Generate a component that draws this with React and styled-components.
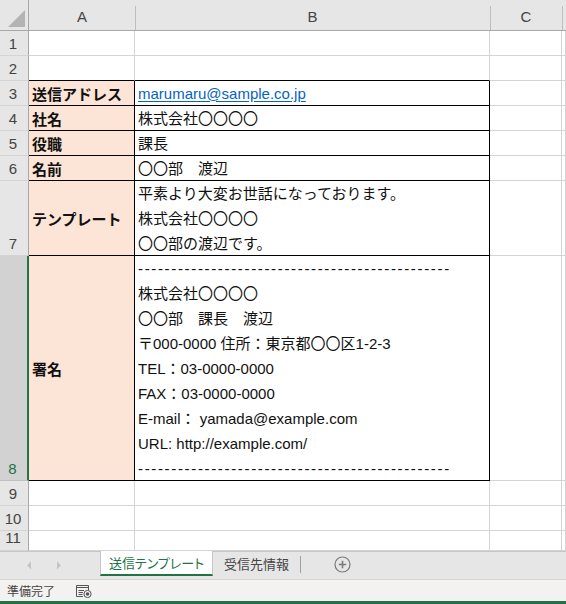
import React from 'react'
import styled, { createGlobalStyle } from 'styled-components'

const GlobalStyle = createGlobalStyle`
  html, body { margin: 0; padding: 0; background: #ffffff; }
  * { box-sizing: border-box; }
  body { font-family: "Liberation Sans", "Noto Sans CJK JP", sans-serif; }
`

const GRID = '#d4d4d4'
const HEAD_LINE = '#a8a8a8'
const GREEN = '#217346'

const Window = styled.div`
  width: 566px;
  height: 604px;
  display: flex;
  flex-direction: column;
  overflow: hidden;
`

const Sheet = styled.div`
  height: 551px;
  overflow: hidden;
  display: flex;
  flex-direction: column;
`

const HeaderRow = styled.div`
  display: flex;
  height: 31px;
  flex-shrink: 0;
  background: #e6e6e6;
  border-bottom: 1px solid ${HEAD_LINE};
`

const Corner = styled.div`
  width: 29px;
  flex-shrink: 0;
  border-right: 1px solid ${HEAD_LINE};
  position: relative;
  &::after {
    content: '';
    position: absolute;
    right: 3px;
    bottom: 3px;
    width: 0;
    height: 0;
    border-left: 17px solid transparent;
    border-bottom: 17px solid #b4b4b4;
  }
`

const ColHead = styled.div`
  width: ${p => p.$w}px;
  flex: ${p => (p.$w ? '0 0 auto' : '1')};
  display: flex;
  align-items: center;
  justify-content: center;
  color: #444;
  font-size: 15px;
  padding-top: 3px;
  position: relative;
  &::after {
    content: '';
    position: absolute;
    right: -1px;
    top: 6px;
    bottom: 0;
    border-right: 1px solid #bdbdbd;
  }
`

const Row = styled.div`
  display: flex;
  height: ${p => p.$h}px;
  flex-shrink: 0;
`

const RowHead = styled.div`
  width: 29px;
  flex-shrink: 0;
  background: ${p => (p.$sel ? '#d2d2d2' : '#e6e6e6')};
  border-right: ${p => (p.$sel ? `2px solid ${GREEN}` : `1px solid ${HEAD_LINE}`)};
  border-bottom: 1px solid ${p => (p.$sel ? '#c0c0c0' : GRID)};
  color: ${p => (p.$sel ? GREEN : '#444')};
  font-size: 15px;
  line-height: 22px;
  display: flex;
  align-items: flex-end;
  justify-content: center;
  padding-right: 2px;
  padding-bottom: ${p => p.$pb || 0}px;
`

const Cell = styled.div`
  width: ${p => p.$w}px;
  flex: ${p => (p.$w ? '0 0 auto' : '1')};
  background: ${p => (p.$label ? '#fce4d6' : '#ffffff')};
  border-right: 1px solid ${p => (p.$darkR ? '#000' : GRID)};
  border-bottom: 1px solid ${p => (p.$darkB ? '#000' : GRID)};
  display: flex;
  flex-direction: column;
  justify-content: center;
  padding-left: 3px;
  color: #111;
  font-size: 15px;
  font-weight: ${p => (p.$label ? 700 : 400)};
  white-space: nowrap;
  overflow: hidden;
`

const Line = styled.div`
  height: 25px;
  line-height: 25px;
`

const Dashes = styled.span`
  letter-spacing: 1.66px;
`

const Link = styled.span`
  color: #0563c1;
  text-decoration: underline;
  text-underline-offset: 2px;
`

const TabBar = styled.div`
  height: 28px;
  flex-shrink: 0;
  background: #e6e6e6;
  border-top: 1px solid #c6c6c6;
  display: flex;
  align-items: stretch;
  font-family: "Noto Sans CJK JP", sans-serif;
  font-feature-settings: "palt";
`

const Arrows = styled.div`
  width: 100px;
  display: flex;
  align-items: center;
  gap: 24px;
  padding-left: 26px;
`

const Tab = styled.div`
  display: flex;
  align-items: center;
  justify-content: center;
  white-space: nowrap;
  font-size: 13px;
  width: ${p => p.$w}px;
  flex-shrink: 0;
  color: ${p => (p.$active ? GREEN : '#444')};
  background: ${p => (p.$active ? '#ffffff' : 'transparent')};
  margin-top: ${p => (p.$active ? '-1px' : '0')};
  border-left: ${p => (p.$active ? '1px solid #c6c6c6' : 'none')};
  border-right: ${p => (p.$active ? '1px solid #c6c6c6' : 'none')};
  border-bottom: 2px solid ${p => (p.$active ? GREEN : 'transparent')};
  margin-bottom: 3px;
`

const Divider = styled.div`
  width: 1px;
  background: #a0a0a0;
  margin: 4px 0 6px;
`

const AddButton = styled.div`
  display: flex;
  align-items: center;
  margin-left: 33px;
  padding-bottom: 2px;
`

const StatusBar = styled.div`
  flex: 1;
  background: #f3f2f1;
  border-top: 1px solid #d6d6d6;
  border-bottom: 3px solid ${GREEN};
  display: flex;
  align-items: center;
  padding-left: 7px;
  gap: 20px;
  font-family: "Noto Sans CJK JP", sans-serif;
  font-size: 12px;
  color: #444;
`

const dash = '-'.repeat(47)

const rows = [
  { n: 1, h: 25 },
  { n: 2, h: 25, darkB: true },
  { n: 3, h: 25, label: '送信アドレス', value: [<Link key="l">marumaru@sample.co.jp</Link>] },
  { n: 4, h: 25, label: '社名', value: ['株式会社〇〇〇〇'] },
  { n: 5, h: 25, label: '役職', value: ['課長'] },
  { n: 6, h: 25, label: '名前', value: ['〇〇部　渡辺'] },
  {
    n: 7,
    h: 75,
    label: 'テンプレート',
    value: ['平素より大変お世話になっております。', '株式会社〇〇〇〇', '〇〇部の渡辺です。'],
  },
  {
    n: 8,
    h: 225,
    sel: true,
    label: '署名',
    value: [
      dash,
      '株式会社〇〇〇〇',
      '〇〇部　課長　渡辺',
      '〒000-0000 住所：東京都〇〇区1-2-3',
      'TEL：03-0000-0000',
      'FAX：03-0000-0000',
      'E-mail： yamada@example.com',
      'URL: http://example.com/',
      dash,
    ],
  },
  { n: 9, h: 25 },
  { n: 10, h: 25 },
  { n: 11, h: 20, pb: 1 },
]

const ArrowIcon = ({ dir }) => (
  <svg width="6" height="9" viewBox="0 0 6 9">
    <path d={dir === 'left' ? 'M5 0.5 L1 4.5 L5 8.5 Z' : 'M1 0.5 L5 4.5 L1 8.5 Z'} fill="#c4c4c4" />
  </svg>
)

const PlusIcon = () => (
  <svg width="17" height="17" viewBox="0 0 17 17">
    <circle cx="8.5" cy="8.5" r="7.5" fill="none" stroke="#7a7a7a" strokeWidth="1.2" />
    <path d="M8.5 4.8 V12.2 M4.8 8.5 H12.2" stroke="#7a7a7a" strokeWidth="1.6" />
  </svg>
)

const MacroIcon = () => (
  <svg width="17" height="14" viewBox="0 0 17 14">
    <path d="M1.5 1.5 H13.5 V6 M1.5 1.5 V12.5 H8" fill="none" stroke="#555" strokeWidth="1" />
    <path d="M1.5 3.5 H13.5" stroke="#555" strokeWidth="1" />
    <path d="M3.5 6.5 H9 M3.5 8.5 H8 M3.5 10.5 H7.5" stroke="#555" strokeWidth="1" />
    <circle cx="12.5" cy="10" r="3.6" fill="#f3f2f1" stroke="#555" strokeWidth="1" />
    <circle cx="12.5" cy="10" r="1.8" fill="#555" />
  </svg>
)

const renderValue = v =>
  typeof v === 'string' && v.startsWith('---') ? <Dashes>{v}</Dashes> : v

export default function App() {
  return (
    <Window>
      <GlobalStyle />
      <Sheet>
        <HeaderRow>
          <Corner />
          <ColHead $w={106}>A</ColHead>
          <ColHead $w={355}>B</ColHead>
          <ColHead $w={72}>C</ColHead>
          <ColHead />
        </HeaderRow>
        {rows.map(r => {
          const boxed = !!r.label
          return (
            <Row key={r.n} $h={r.h}>
              <RowHead $sel={r.sel} $pb={r.pb}>{r.n}</RowHead>
              <Cell $w={106} $label={boxed} $darkR={boxed} $darkB={boxed || r.darkB}>
                {r.label}
              </Cell>
              <Cell $w={355} $darkR={boxed} $darkB={boxed || r.darkB}>
                {r.value &&
                  r.value.map((v, i) => <Line key={i}>{renderValue(v)}</Line>)}
              </Cell>
              <Cell $w={72} />
              <Cell />
            </Row>
          )
        })}
      </Sheet>
      <TabBar>
        <Arrows>
          <ArrowIcon dir="left" />
          <ArrowIcon dir="right" />
        </Arrows>
        <Tab $active $w={113}>送信テンプレート</Tab>
        <Tab $w={87}>受信先情報</Tab>
        <Divider />
        <AddButton>
          <PlusIcon />
        </AddButton>
      </TabBar>
      <StatusBar>
        <span>準備完了</span>
        <MacroIcon />
      </StatusBar>
    </Window>
  )
}
